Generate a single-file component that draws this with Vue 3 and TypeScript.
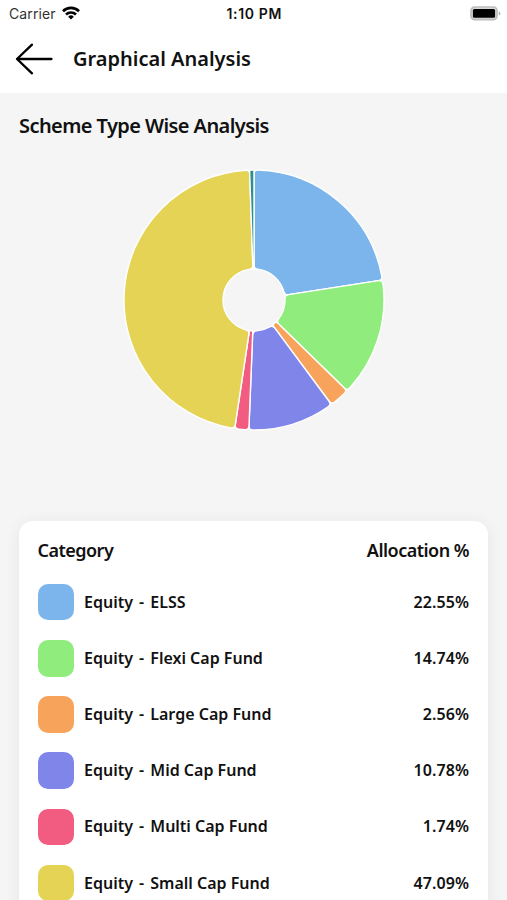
<script setup lang="ts">
interface Slice {
  group: string
  name: string
  value: number
  color: string
}

const slices: Slice[] = [
  { group: 'Equity', name: 'ELSS', value: 22.55, color: '#7cb5ec' },
  { group: 'Equity', name: 'Flexi Cap Fund', value: 14.74, color: '#90ed7d' },
  { group: 'Equity', name: 'Large Cap Fund', value: 2.56, color: '#f7a35c' },
  { group: 'Equity', name: 'Mid Cap Fund', value: 10.78, color: '#8085e9' },
  { group: 'Equity', name: 'Multi Cap Fund', value: 1.74, color: '#f15c80' },
  { group: 'Equity', name: 'Small Cap Fund', value: 47.09, color: '#e4d354' },
  { group: 'Others', name: 'Others', value: 0.54, color: '#2b908f' },
]

const rows = slices.slice(0, 6)

const OUTER = 130
const INNER = 31

const point = (radius: number, angle: number): string =>
  `${(radius * Math.sin(angle)).toFixed(2)} ${(-radius * Math.cos(angle)).toFixed(2)}`

// Ring sector with softened corners
function sector(start: number, end: number): string {
  const span = end - start
  const co = Math.min(4, (span * OUTER) / 3)
  const ci = Math.min(4, (span * INNER) / 3)
  const large = span > Math.PI ? 1 : 0
  const ao = co / OUTER
  const ai = ci / INNER
  return [
    `M ${point(INNER + ci, start)}`,
    `L ${point(OUTER - co, start)}`,
    `Q ${point(OUTER, start)} ${point(OUTER, start + ao)}`,
    `A ${OUTER} ${OUTER} 0 ${large} 1 ${point(OUTER, end - ao)}`,
    `Q ${point(OUTER, end)} ${point(OUTER - co, end)}`,
    `L ${point(INNER + ci, end)}`,
    `Q ${point(INNER, end)} ${point(INNER, end - ai)}`,
    `A ${INNER} ${INNER} 0 ${large} 0 ${point(INNER, start + ai)}`,
    `Q ${point(INNER, start)} ${point(INNER + ci, start)}`,
    'Z',
  ].join(' ')
}

const total = slices.reduce((sum, s) => sum + s.value, 0)
let cursor = 0
const sectors = slices.map((s) => {
  const start = cursor
  cursor += (s.value / total) * Math.PI * 2
  return { color: s.color, name: s.name, d: sector(start, cursor) }
})
</script>

<template>
  <div class="screen">
    <header class="top">
      <div class="status">
        <div class="carrier">
          <span>Carrier</span>
          <svg class="wifi" width="18" height="14" viewBox="0 0 18 14" fill="none" stroke="#000" stroke-width="2.7">
            <path d="M1 5.2a11.4 11.4 0 0 1 16 0" />
            <path d="M4 8.5a7.2 7.2 0 0 1 10 0" />
            <path d="M9 13.4 6.2 10.7a4 4 0 0 1 5.6 0z" fill="#000" stroke="none" />
          </svg>
        </div>
        <span class="time">1:10 PM</span>
        <svg class="battery" width="31" height="15" viewBox="0 0 31 15">
          <rect x="1" y="1" width="26" height="12.6" rx="3.6" fill="#d8d8d8" stroke="#bdbdbd" stroke-width="1.7" />
          <rect x="2.9" y="2.9" width="22.2" height="8.8" rx="1.5" fill="#000" />
          <path d="M28.7 5.2v4.4q1.8-.7 1.8-2.2t-1.8-2.2z" fill="#b5b5b5" />
        </svg>
      </div>
      <div class="nav">
        <svg class="back" width="38" height="32" viewBox="0 0 38 32" fill="none" stroke="#000" stroke-width="2.3" stroke-linecap="round" stroke-linejoin="round">
          <path d="M17 1.7 2 16l15 14.3M2 16h34.5" />
        </svg>
        <h1>Graphical Analysis</h1>
      </div>
    </header>

    <main>
      <h2>Scheme Type Wise Analysis</h2>
      <svg class="chart" width="264" height="264" viewBox="-132 -132 264 264">
        <path v-for="s in sectors" :key="s.name" :d="s.d" :fill="s.color" stroke="#fff" stroke-width="1.4" stroke-linejoin="round" />
      </svg>
      <section class="card">
        <div class="head">
          <span class="category">Category</span>
          <span class="allocation">Allocation %</span>
        </div>
        <div v-for="row in rows" :key="row.name" class="row">
          <span class="swatch" :style="{ background: row.color }"></span>
          <span class="name">{{ row.group }} <span class="dash">-</span> {{ row.name }}</span>
          <span class="value">{{ row.value.toFixed(2) }}%</span>
        </div>
      </section>
    </main>
  </div>
</template>

<style>
body {
  margin: 0;
  overflow: hidden;
}
</style>

<style scoped>
.screen {
  width: 507px;
  height: 900px;
  overflow: hidden;
  background: #f5f5f5;
  color: #111;
  font-family: 'Noto Sans', 'Open Sans', sans-serif;
  font-weight: 600;
}
.top {
  height: 92.5px;
  background: #fff;
}
.status {
  display: grid;
  grid-template-columns: 1fr auto 1fr;
  align-items: center;
  height: 27px;
  padding: 0 6px 0 9px;
  font-family: Inter, sans-serif;
  font-size: 14px;
  line-height: 27px;
}
.time {
  margin-left: -1.5px;
  font-weight: 600;
  letter-spacing: 0.65px;
}
.carrier {
  display: flex;
  align-items: center;
  gap: 6px;
  font-weight: 400;
  letter-spacing: 0.1px;
  color: #333;
}
.wifi {
  margin-bottom: 1px;
}
.battery {
  justify-self: end;
}
.nav {
  display: flex;
  align-items: center;
  height: 64px;
  padding-left: 15px;
  gap: 20px;
}
h1,
h2 {
  margin: 0;
  font-size: 20px;
  font-weight: 600;
  line-height: 28px;
}
h2 {
  padding: 19.5px 19px 0;
  letter-spacing: -0.58px;
}
.chart {
  display: block;
  margin: 28px auto 0 122px;
}
.card {
  box-sizing: border-box;
  height: 460px;
  margin: 89px 19px 0;
  padding: 15px 19px 0 18.5px;
  border-radius: 14px;
  background: #fff;
  box-shadow: 0 2px 16px rgba(0, 0, 0, 0.07);
}
.head {
  display: flex;
  justify-content: space-between;
  height: 38px;
  font-size: 18px;
  line-height: 28px;
  letter-spacing: -0.52px;
}
.row {
  display: flex;
  align-items: center;
  height: 56.2px;
  font-size: 16px;
}
.swatch {
  width: 36.6px;
  height: 36.6px;
  margin-right: 10px;
  border-radius: 10px;
}
.name,
.value {
  margin-top: -1px;
}
.dash {
  padding: 0 1.9px;
}
.value {
  margin-left: auto;
  letter-spacing: 0.1px;
}
</style>
